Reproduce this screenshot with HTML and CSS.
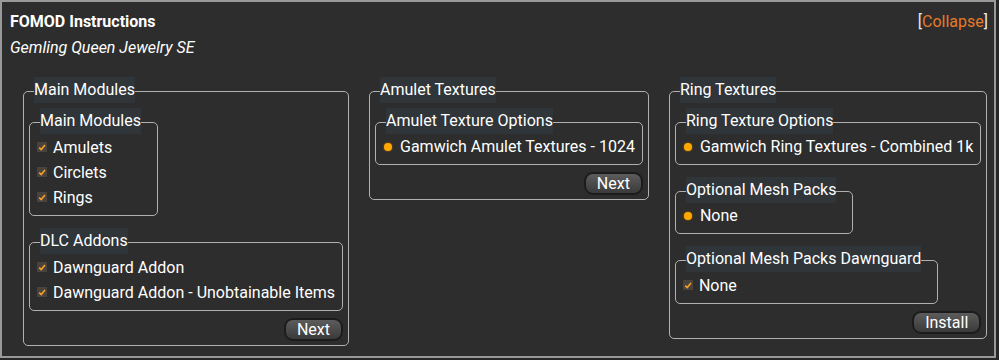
FILE: index.html
```html
<!DOCTYPE html>
<html lang="en">
<head>
    <meta charset="UTF-8">
    <title>FOMOD Instructions</title>
    <link rel="stylesheet" href="styles.css">
</head>
<body>

<div class="panel">
    <div class="header">
        <div>
            <div class="title">FOMOD Instructions</div>
            <div class="subtitle">Gemling Queen Jewelry SE</div>
        </div>
        <div class="collapse">[<a href="#">Collapse</a>]</div>
    </div>

    <div class="steps">
        <fieldset class="step">
            <legend>Main Modules</legend>
            <div class="step-body">
                <fieldset class="group">
                    <legend>Main Modules</legend>
                    <label class="option"><span class="check"><svg width="10" height="10" viewBox="0 0 10 10"><rect width="10" height="10" fill="#4a423c"/><path d="M2.2 5.6 L4.2 7.6 L8 3" fill="none" stroke="#f3a12a" stroke-width="1.6"/></svg></span>Amulets</label>
                    <label class="option"><span class="check"><svg width="10" height="10" viewBox="0 0 10 10"><rect width="10" height="10" fill="#4a423c"/><path d="M2.2 5.6 L4.2 7.6 L8 3" fill="none" stroke="#f3a12a" stroke-width="1.6"/></svg></span>Circlets</label>
                    <label class="option"><span class="check"><svg width="10" height="10" viewBox="0 0 10 10"><rect width="10" height="10" fill="#4a423c"/><path d="M2.2 5.6 L4.2 7.6 L8 3" fill="none" stroke="#f3a12a" stroke-width="1.6"/></svg></span>Rings</label>
                </fieldset>
                <fieldset class="group">
                    <legend>DLC Addons</legend>
                    <label class="option"><span class="check"><svg width="10" height="10" viewBox="0 0 10 10"><rect width="10" height="10" fill="#4a423c"/><path d="M2.2 5.6 L4.2 7.6 L8 3" fill="none" stroke="#f3a12a" stroke-width="1.6"/></svg></span>Dawnguard Addon</label>
                    <label class="option"><span class="check"><svg width="10" height="10" viewBox="0 0 10 10"><rect width="10" height="10" fill="#4a423c"/><path d="M2.2 5.6 L4.2 7.6 L8 3" fill="none" stroke="#f3a12a" stroke-width="1.6"/></svg></span>Dawnguard Addon - Unobtainable Items</label>
                </fieldset>
                <div class="actions"><button type="button">Next</button></div>
            </div>
        </fieldset>

        <fieldset class="step">
            <legend>Amulet Textures</legend>
            <div class="step-body">
                <fieldset class="group">
                    <legend>Amulet Texture Options</legend>
                    <label class="option single"><span class="radio"></span>Gamwich Amulet Textures - 1024</label>
                </fieldset>
                <div class="actions"><button type="button">Next</button></div>
            </div>
        </fieldset>

        <fieldset class="step">
            <legend>Ring Textures</legend>
            <div class="step-body">
                <fieldset class="group">
                    <legend>Ring Texture Options</legend>
                    <label class="option single"><span class="radio"></span>Gamwich Ring Textures - Combined 1k</label>
                </fieldset>
                <fieldset class="group">
                    <legend>Optional Mesh Packs</legend>
                    <label class="option single"><span class="radio"></span>None</label>
                </fieldset>
                <fieldset class="group">
                    <legend>Optional Mesh Packs Dawnguard</legend>
                    <label class="option"><span class="check"><svg width="10" height="10" viewBox="0 0 10 10"><rect width="10" height="10" fill="#4a423c"/><path d="M2.2 5.6 L4.2 7.6 L8 3" fill="none" stroke="#f3a12a" stroke-width="1.6"/></svg></span>None</label>
                </fieldset>
                <div class="actions"><button type="button">Install</button></div>
            </div>
        </fieldset>
    </div>
</div>

</body>
</html>
```

FILE: styles.css
```css
body {
    margin: 0;
    background: #262626;
    font-family: Roboto, "Liberation Sans", sans-serif;
    color: #fff;
}

.panel {
    box-sizing: border-box;
    width: 996px;
    height: 358px;
    background: #2d2d2d;
    border: 2px solid #999;
    padding: 8px 6px 0 8px;
}

.header {
    display: flex;
    justify-content: space-between;
    align-items: flex-start;
}

.title {
    font-size: 16px;
    font-weight: bold;
    line-height: 24px;
}

.subtitle {
    font-size: 16px;
    font-style: italic;
    line-height: 24px;
    margin-top: 2px;
}

.collapse {
    font-size: 16px;
    line-height: 24px;
    color: #e8e8e8;
}

.collapse a {
    color: #e67a2a;
    text-decoration: none;
}

.steps {
    display: flex;
    align-items: flex-start;
    gap: 20px;
    margin-top: 17px;
    padding-left: 13px;
}

fieldset {
    margin: 0;
    border: 1px solid #b0b0b0;
    border-radius: 5px;
    min-width: 0;
}

legend {
    font-size: 16px;
    line-height: 26px;
    padding: 0 0 3px;
    margin: 0 9px 0 5px;
    background: linear-gradient(#30353a, #30353a) top / 100% 26px no-repeat;
}

.step {
    padding: 0 5px 4px;
}

.step-body {
    display: flex;
    flex-direction: column;
    align-items: flex-start;
    padding-top: 2px;
}

.group {
    padding: 0 7px 3px 5px;
}

.group + .group {
    margin-top: 12px;
}

.option {
    display: flex;
    align-items: center;
    height: 20px;
    margin-bottom: 5px;
    font-size: 16px;
    white-space: nowrap;
}

.option.single {
    height: 19px;
}

.check {
    display: flex;
    margin: 0 6px 0 2px;
}

.radio {
    width: 8px;
    height: 8px;
    border-radius: 50%;
    background: #ffa800;
    box-shadow: 0 0 2px #b87400;
    margin: 0 8px 0 3px;
}

.actions {
    align-self: stretch;
    display: flex;
    justify-content: flex-end;
    margin-top: 7px;
}

button {
    height: 23px;
    padding: 0 11px;
    font-family: Roboto, "Liberation Sans", sans-serif;
    font-size: 16px;
    color: #fff;
    background: linear-gradient(#5c5c5c, #3a3a3a);
    border: 2px solid #1c1c1c;
    border-radius: 9px;
    cursor: pointer;
}
```
